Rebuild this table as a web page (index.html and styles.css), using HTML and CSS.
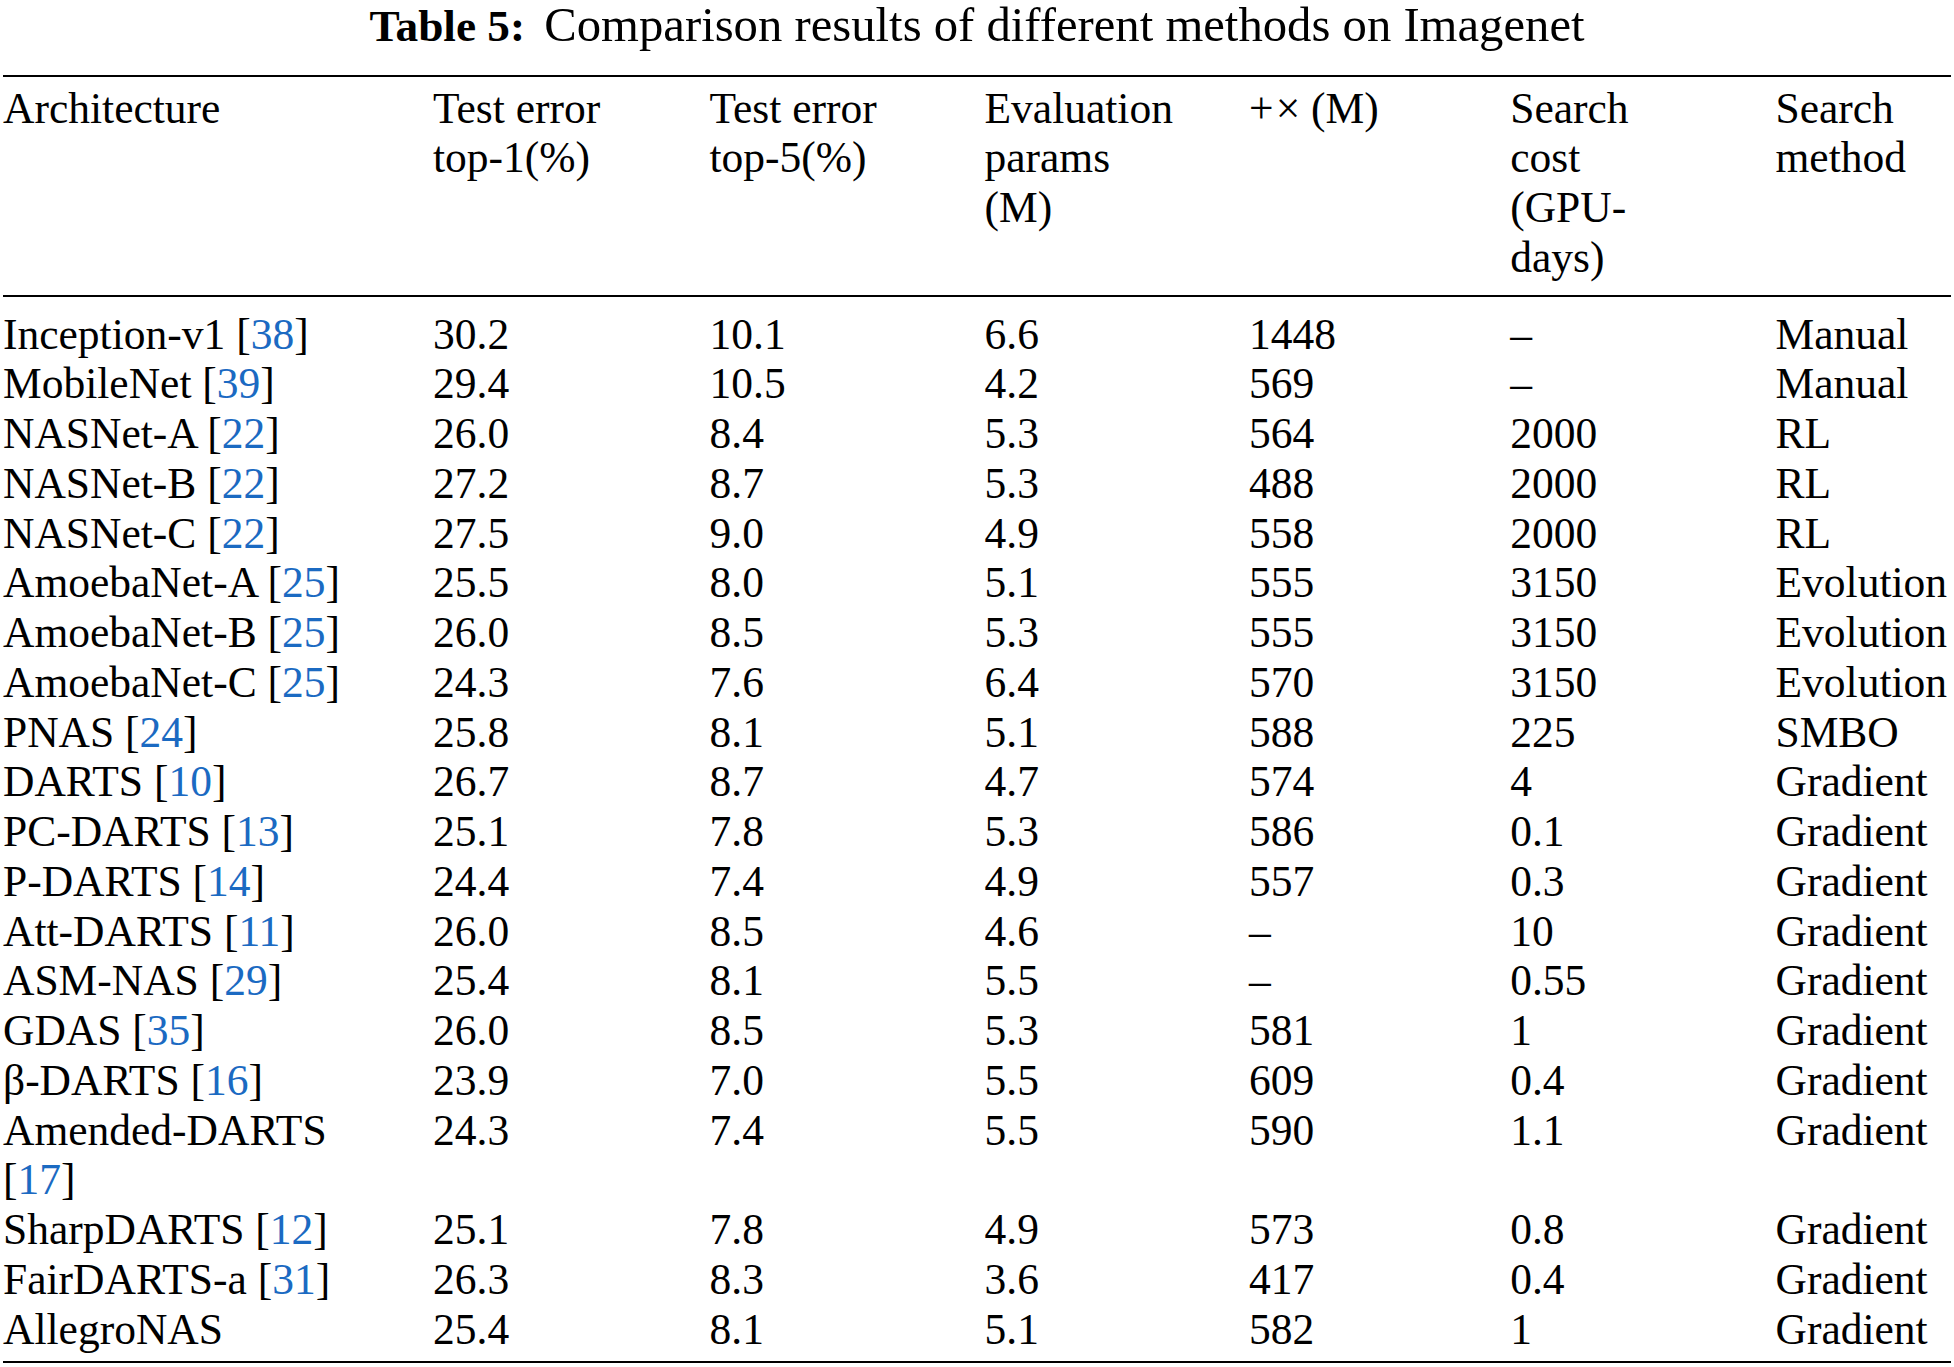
FILE: index.html
```html
<!DOCTYPE html>
<html lang="en">
<head>
<meta charset="utf-8">
<title>Table 5: Comparison results of different methods on Imagenet</title>
<link rel="stylesheet" href="styles.css">
</head>
<body>
<div class="page">
  <div class="caption"><span class="label">Table 5:</span> Comparison results of different methods on Imagenet</div>
  <table class="results">
    <colgroup>
      <col class="c1"><col class="c2"><col class="c3"><col class="c4"><col class="c5"><col class="c6"><col class="c7">
    </colgroup>
    <thead>
      <tr>
        <th>Architecture</th>
        <th>Test error top-1(%)</th>
        <th>Test error top-5(%)</th>
        <th>Evaluation params (M)</th>
        <th><span class="ops">+<span class="times">&times;</span></span> (M)</th>
        <th>Search cost (GPU-days)</th>
        <th>Search method</th>
      </tr>
    </thead>
    <tbody>
      <tr><td>Inception-v1 <span class="cite">[<a class="ref">38</a>]</span></td><td>30.2</td><td>10.1</td><td>6.6</td><td>1448</td><td>&ndash;</td><td>Manual</td></tr>
      <tr><td>MobileNet <span class="cite">[<a class="ref">39</a>]</span></td><td>29.4</td><td>10.5</td><td>4.2</td><td>569</td><td>&ndash;</td><td>Manual</td></tr>
      <tr><td>NASNet-A <span class="cite">[<a class="ref">22</a>]</span></td><td>26.0</td><td>8.4</td><td>5.3</td><td>564</td><td>2000</td><td>RL</td></tr>
      <tr><td>NASNet-B <span class="cite">[<a class="ref">22</a>]</span></td><td>27.2</td><td>8.7</td><td>5.3</td><td>488</td><td>2000</td><td>RL</td></tr>
      <tr><td>NASNet-C <span class="cite">[<a class="ref">22</a>]</span></td><td>27.5</td><td>9.0</td><td>4.9</td><td>558</td><td>2000</td><td>RL</td></tr>
      <tr><td>AmoebaNet-A <span class="cite">[<a class="ref">25</a>]</span></td><td>25.5</td><td>8.0</td><td>5.1</td><td>555</td><td>3150</td><td>Evolution</td></tr>
      <tr><td>AmoebaNet-B <span class="cite">[<a class="ref">25</a>]</span></td><td>26.0</td><td>8.5</td><td>5.3</td><td>555</td><td>3150</td><td>Evolution</td></tr>
      <tr><td>AmoebaNet-C <span class="cite">[<a class="ref">25</a>]</span></td><td>24.3</td><td>7.6</td><td>6.4</td><td>570</td><td>3150</td><td>Evolution</td></tr>
      <tr><td>PNAS <span class="cite">[<a class="ref">24</a>]</span></td><td>25.8</td><td>8.1</td><td>5.1</td><td>588</td><td>225</td><td>SMBO</td></tr>
      <tr><td>DARTS <span class="cite">[<a class="ref">10</a>]</span></td><td>26.7</td><td>8.7</td><td>4.7</td><td>574</td><td>4</td><td>Gradient</td></tr>
      <tr><td>PC-DARTS <span class="cite">[<a class="ref">13</a>]</span></td><td>25.1</td><td>7.8</td><td>5.3</td><td>586</td><td>0.1</td><td>Gradient</td></tr>
      <tr><td>P-DARTS <span class="cite">[<a class="ref">14</a>]</span></td><td>24.4</td><td>7.4</td><td>4.9</td><td>557</td><td>0.3</td><td>Gradient</td></tr>
      <tr><td>Att-DARTS <span class="cite">[<a class="ref">11</a>]</span></td><td>26.0</td><td>8.5</td><td>4.6</td><td>&ndash;</td><td>10</td><td>Gradient</td></tr>
      <tr><td>ASM-NAS <span class="cite">[<a class="ref">29</a>]</span></td><td>25.4</td><td>8.1</td><td>5.5</td><td>&ndash;</td><td>0.55</td><td>Gradient</td></tr>
      <tr><td>GDAS <span class="cite">[<a class="ref">35</a>]</span></td><td>26.0</td><td>8.5</td><td>5.3</td><td>581</td><td>1</td><td>Gradient</td></tr>
      <tr><td>&beta;-DARTS <span class="cite">[<a class="ref">16</a>]</span></td><td>23.9</td><td>7.0</td><td>5.5</td><td>609</td><td>0.4</td><td>Gradient</td></tr>
      <tr><td>Amended-DARTS <span class="cite">[<a class="ref">17</a>]</span></td><td>24.3</td><td>7.4</td><td>5.5</td><td>590</td><td>1.1</td><td>Gradient</td></tr>
      <tr><td>SharpDARTS <span class="cite">[<a class="ref">12</a>]</span></td><td>25.1</td><td>7.8</td><td>4.9</td><td>573</td><td>0.8</td><td>Gradient</td></tr>
      <tr><td>FairDARTS-a <span class="cite">[<a class="ref">31</a>]</span></td><td>26.3</td><td>8.3</td><td>3.6</td><td>417</td><td>0.4</td><td>Gradient</td></tr>
      <tr><td>AllegroNAS</td><td>25.4</td><td>8.1</td><td>5.1</td><td>582</td><td>1</td><td>Gradient</td></tr>
    </tbody>
  </table>
</div>
</body>
</html>
```

FILE: styles.css
```css
html, body {
  margin: 0;
  padding: 0;
  background: #ffffff;
}

body {
  font-family: "Liberation Serif", "Times New Roman", serif;
  color: #000000;
}

.page {
  width: 1948px;
  padding-left: 3px;
}

.caption {
  text-align: center;
  font-size: 48.7px;
  line-height: 51px;
  height: 51px;
  margin-bottom: 24px;
  white-space: nowrap;
}

.caption .label {
  font-weight: bold;
  font-size: 45.3px;
  margin-right: 7px;
}

.results {
  width: 1948px;
  table-layout: fixed;
  border-collapse: separate;
  border-spacing: 0;
  border-top: 2px solid #000;
  border-bottom: 2px solid #000;
  font-size: 43.5px;
  line-height: 49.75px;
}

.c1 { width: 430px; }
.c2 { width: 276.5px; }
.c3 { width: 275px; }
.c4 { width: 264.6px; }
.c5 { width: 261.1px; }
.c6 { width: 265.3px; }
.c7 { width: 175.5px; }

.results th,
.results td {
  text-align: left;
  vertical-align: top;
  font-weight: normal;
  padding: 0 70px 0 0;
}

.results th:last-child,
.results td:last-child {
  padding-right: 0;
}

.results th {
  padding-top: 6.5px;
  padding-bottom: 12px;
  border-bottom: 2px solid #000;
}

.results tbody tr:first-child td {
  padding-top: 13px;
}

.results tbody tr:last-child td {
  padding-bottom: 6.5px;
}

.cite {
  white-space: nowrap;
}

.ref {
  color: #1b6ac2;
  text-decoration: none;
}

.ops .times {
  margin-left: 2px;
}
```
